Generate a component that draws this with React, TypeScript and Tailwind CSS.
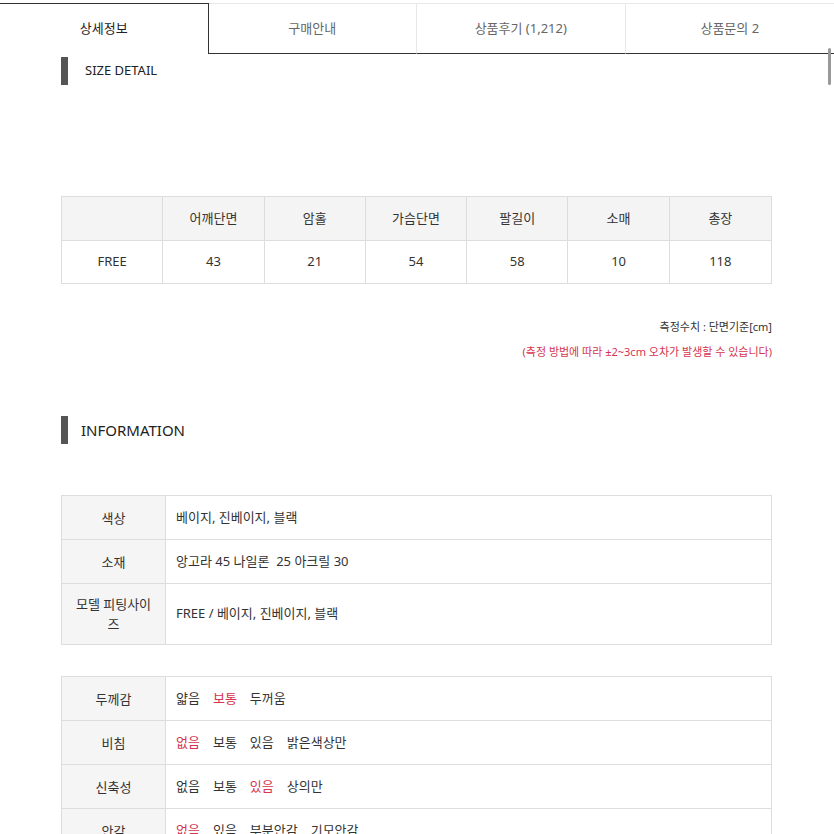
import type { ReactNode } from "react";

const font = { fontFamily: '"Noto Sans", "Noto Sans CJK KR", sans-serif' };

const tabs = ["상세정보", "구매안내", "상품후기 (1,212)", "상품문의 2"];
const sizeHead = ["", "어깨단면", "암홀", "가슴단면", "팔길이", "소매", "총장"];
const sizeBody = ["FREE", "43", "21", "54", "58", "10", "118"];

function SectionTitle({ children, big = false }: { children: ReactNode; big?: boolean }) {
  return (
    <div className="flex items-center">
      <span className="h-[28px] w-[7px] bg-[#555]" />
      <span className={big ? "ml-[13px] text-[15px] text-[#222]" : "ml-[17px] text-[13px] text-[#222]"}>{children}</span>
    </div>
  );
}

function InfoRow({ label, children, tall = false }: { label: string; children: ReactNode; tall?: boolean }) {
  return (
    <div className={`flex border-b border-[#ddd] last:border-b-0 ${tall ? "h-[60px]" : "h-[44px]"}`}>
      <div className="flex w-[104px] shrink-0 items-center justify-center border-r border-[#ddd] bg-[#f5f5f5] px-2 text-center text-[13px] leading-[20px] text-[#333]">
        {label}
      </div>
      <div className="flex items-center gap-[13px] pl-[10px] text-[13px] text-[#333]">{children}</div>
    </div>
  );
}

const Red = ({ children }: { children: ReactNode }) => <span className="text-[#d6344f]">{children}</span>;

export default function App() {
  return (
    <div className="relative min-h-[834px] w-[834px] bg-white pt-[3px]" style={font}>
      <div className="grid h-[51px] grid-cols-4">
        {tabs.map((t, i) =>
          i === 0 ? (
            <div key={t} className="flex items-center justify-center border-t border-r border-[#333] text-[13px] text-[#222]">
              {t}
            </div>
          ) : (
            <div
              key={t}
              className="flex items-center justify-center border-t border-b border-[#e8e8e8] border-b-[#333] text-[13px] text-[#666] [&:not(:last-child)]:border-r"
            >
              {t}
            </div>
          )
        )}
      </div>
      <div className="absolute right-[3px] top-[48px] h-[37px] w-[3px] rounded bg-[#999]" />

      <div className="px-[61px] pt-[3px]">
        <SectionTitle>SIZE DETAIL</SectionTitle>

        <div className="mt-[111px] w-[711px] border border-[#ddd] text-[13px] text-[#333]">
          <div className="grid h-[43px] grid-cols-7 bg-[#f4f4f4]">
            {sizeHead.map((h, i) => (
              <div key={i} className="flex items-center justify-center border-r border-[#ddd] last:border-r-0">
                {h}
              </div>
            ))}
          </div>
          <div className="grid h-[43px] grid-cols-7 border-t border-[#ddd]">
            {sizeBody.map((v, i) => (
              <div key={i} className="flex items-center justify-center border-r border-[#ddd] last:border-r-0">
                {v}
              </div>
            ))}
          </div>
        </div>

        <div className="mt-[35px] w-[711px] text-right text-[11px] text-[#333]">측정수치 : 단면기준[cm]</div>
        <div className="mt-[8px] w-[711px] text-right text-[11px] text-[#d6344f]">(측정 방법에 따라 ±2~3cm 오차가 발생할 수 있습니다)</div>

        <div className="mt-[56px]">
          <SectionTitle big>INFORMATION</SectionTitle>
        </div>

        <div className="mt-[51px] w-[711px] border border-[#ddd]">
          <InfoRow label="색상">베이지, 진베이지, 블랙</InfoRow>
          <InfoRow label="소재">앙고라 45 나일론&nbsp; 25 아크릴 30</InfoRow>
          <InfoRow label="모델 피팅사이즈" tall>
            FREE / 베이지, 진베이지, 블랙
          </InfoRow>
        </div>

        <div className="mt-[31px] w-[711px] border border-[#ddd]">
          <InfoRow label="두께감">
            <span>얇음</span>
            <Red>보통</Red>
            <span>두꺼움</span>
          </InfoRow>
          <InfoRow label="비침">
            <Red>없음</Red>
            <span>보통</span>
            <span>있음</span>
            <span>밝은색상만</span>
          </InfoRow>
          <InfoRow label="신축성">
            <span>없음</span>
            <span>보통</span>
            <Red>있음</Red>
            <span>상의만</span>
          </InfoRow>
          <InfoRow label="안감">
            <Red>없음</Red>
            <span>있음</span>
            <span>부분안감</span>
            <span>기모안감</span>
          </InfoRow>
        </div>
      </div>
    </div>
  );
}
